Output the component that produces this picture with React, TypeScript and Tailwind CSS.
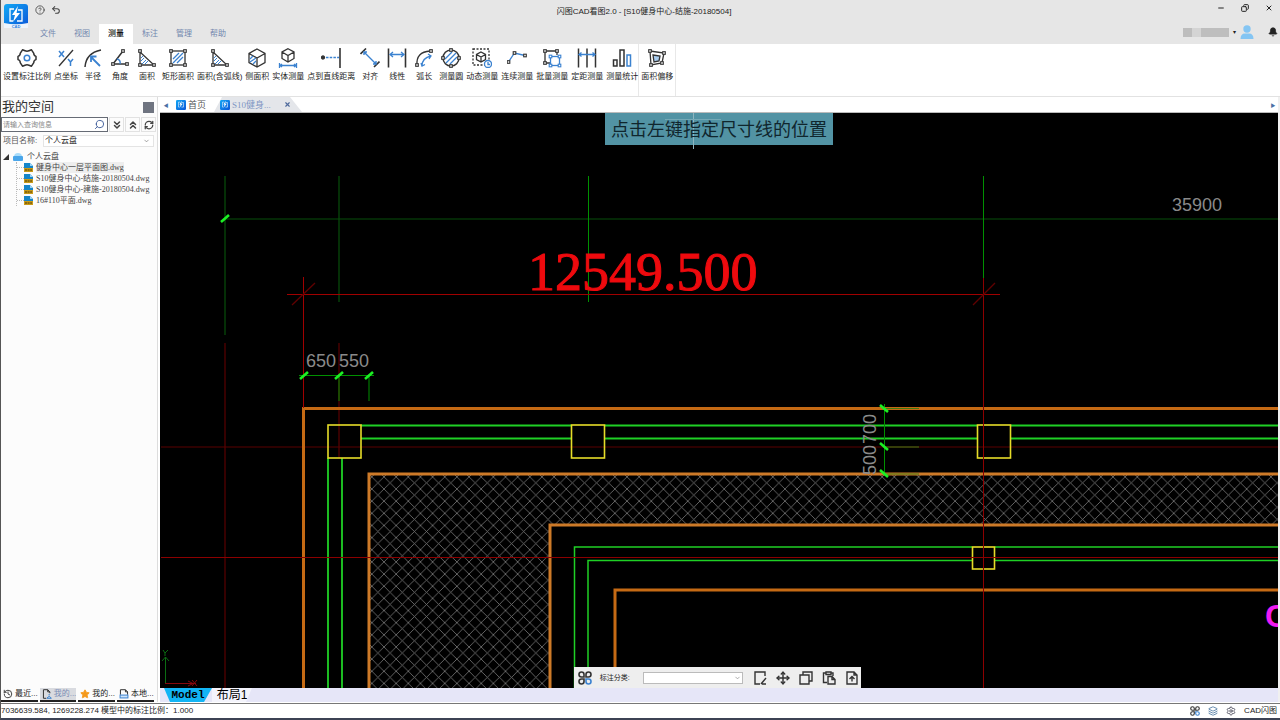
import type { ReactNode } from "react";
import { Bell, ChevronDown, ChevronsDown, ChevronsUp, CircleHelp, Layers, Minus, Move, RefreshCw, Search, Settings, Star, Undo2, X, Copy, History } from "lucide-react";

const INK = "#333333";
const BLUE = "#3b82d0";

function Tool({ children }: { children: ReactNode }) {
  return (
    <svg viewBox="0 0 20 20" className="h-5 w-5" fill="none" stroke={INK} strokeWidth="1.3">
      {children}
    </svg>
  );
}

// Small square handles used on the vertices of most measuring icons
function Handles({ at, color = INK }: { at: [number, number][]; color?: string }) {
  return (
    <>
      {at.map(([x, y]) => (
        <rect key={`${x}-${y}`} x={x - 1.3} y={y - 1.3} width="2.6" height="2.6" fill="#fff" stroke={color} strokeWidth="1.1" />
      ))}
    </>
  );
}

const triangle = (
  <Tool>
    <path d="M3 4V17H17Z" />
    <path d="M5 16L9 12M8 16L11 13M4 13L7 10M4 10L6 8" stroke={BLUE} strokeWidth="1" />
    <Handles at={[[3, 3], [3, 17], [17, 17]]} />
  </Tool>
);

const tools = [
  {
    label: "设置标注比例",
    icon: (
      <Tool>
        <path d="M5.5 1.8L8 2.8Q10 3.6 12 2.8L14.5 1.8L16.8 5.4Q16.6 7.600 19 8.400V11.600Q16.600 12.400 16.800 14.600L14.500 18.200L12 17.200Q10 16.400 8 17.200L5.500 18.200L3.200 14.600Q3.400 12.400 1 11.600V8.400Q3.400 7.600 3.200 5.400Z" strokeLinejoin="round" strokeWidth="1.5" />
        <circle cx="10" cy="10" r="2.800" stroke={BLUE} strokeWidth="1.500" />
      </Tool>
    ),
  },
  {
    label: "点坐标",
    icon: (
      <Tool>
        <path d="M17 2L3 18" />
        <path d="M3 3L8 9M8 3L3 9M12 11L14.500 14M17 11L14.500 14V18" stroke={BLUE} strokeWidth="1.500" />
      </Tool>
    ),
  },
  {
    label: "半径",
    icon: (
      <Tool>
        <path d="M2 19Q3 5 18 2" strokeWidth="1.500" />
        <path d="M17 18L8 9M8 14V8.500H13.500" stroke={BLUE} strokeWidth="1.800" />
      </Tool>
    ),
  },
  {
    label: "角度",
    icon: (
      <Tool>
        <path d="M13 3L3 16H17" strokeWidth="1.500" />
        <path d="M7 11Q11 12 10 16" stroke={BLUE} />
        <Handles at={[[13, 3], [3, 16], [17, 16]]} />
      </Tool>
    ),
  },
  { label: "面积", icon: triangle },
  {
    label: "矩形面积",
    icon: (
      <Tool>
        <rect x="3" y="3" width="14" height="14" />
        <path d="M5 11L11 5M5 15L15 5M9 15L15 9" stroke={BLUE} />
        <Handles at={[[3, 3], [17, 3], [3, 17], [17, 17]]} />
      </Tool>
    ),
  },
  { label: "面积(含弧线)", icon: triangle },
  {
    label: "侧面积",
    icon: (
      <Tool>
        <path d="M10 1L18 5.500V14.500L10 19L2 14.500V5.500ZM2 5.500L10 10L18 5.500M10 10V19" />
        <path d="M3 11L6 8M3 14L9 10M6 16L9 13" stroke={BLUE} />
      </Tool>
    ),
  },
  {
    label: "实体测量",
    icon: (
      <Tool>
        <path d="M10 0.700L16 4V10.500L10 14L4 10.500V4ZM4 4L10 7.500L16 4M10 7.500V14" />
        <path d="M1.500 15V20M18.500 15V20M2 17.500H18M4 16L2 17.500L4 19M16 16L18 17.500L16 19" stroke={BLUE} />
      </Tool>
    ),
  },
  {
    label: "点到直线距离",
    icon: (
      <Tool>
        <circle cx="2" cy="9.500" r="1.500" fill={INK} />
        <path d="M5 9.500H18" stroke={BLUE} strokeDasharray="2.500 1.200" />
        <path d="M19 0V20" strokeWidth="1.600" />
      </Tool>
    ),
  },
  {
    label: "对齐",
    icon: (
      <Tool>
        <path d="M0.500 6L6 0.500M14 19L19.500 13.500" strokeWidth="1.600" />
        <path d="M4 4L16 16M4 7V4H7M16 13V16H13" stroke={BLUE} strokeWidth="1.400" />
      </Tool>
    ),
  },
  {
    label: "线性",
    icon: (
      <Tool>
        <path d="M1.500 0.500V19.500M18.500 0.500V19.500" strokeWidth="1.600" />
        <path d="M3 6.500H17M6 4L3 6.500L6 9M14 4L17 6.500L14 9" stroke={BLUE} />
      </Tool>
    ),
  },
  {
    label: "弧长",
    icon: (
      <Tool>
        <path d="M3 17Q2 4 16 3" />
        <path d="M8 18Q8 10 17 8M7 15L8 18L11 16.500M14 6L17 8L15 11" stroke={BLUE} />
        <Handles at={[[3, 17], [17, 3]]} />
      </Tool>
    ),
  },
  {
    label: "测量圆",
    icon: (
      <Tool>
        <circle cx="10" cy="10" r="8" strokeWidth="1.500" />
        <path d="M4 11L11 4M5 15L15 5M9 16L16 9" stroke={BLUE} />
        <Handles at={[[10, 2], [18, 10], [10, 18], [2, 10]]} />
      </Tool>
    ),
  },
  {
    label: "动态测量",
    icon: (
      <Tool>
        <rect x="1" y="1" width="16" height="16" strokeDasharray="2 1.500" />
        <path d="M9 4L13.500 6.500V11.500L9 14L4.500 11.500V6.500ZM4.500 6.500L9 9L13.500 6.500M9 9V14" />
        <circle cx="16" cy="16" r="3.500" fill="#fff" stroke={BLUE} />
        <path d="M16 14V16.500H18" stroke={BLUE} />
      </Tool>
    ),
  },
  {
    label: "连续测量",
    icon: (
      <Tool>
        <path d="M1.500 14L7.500 5L18 7.500" stroke={BLUE} />
        <Handles at={[[1.500, 14], [7.500, 5], [18, 7.500]]} />
      </Tool>
    ),
  },
  {
    label: "批量测量",
    icon: (
      <Tool>
        <path d="M3 3H15M3 3V15H8M15 3V7" />
        <Handles at={[[3, 3], [15, 3], [3, 15]]} />
        <rect x="8.500" y="8.500" width="9" height="9" stroke={BLUE} />
        <Handles at={[[8.500, 8.500], [17.500, 8.500], [8.500, 17.500], [17.500, 17.500]]} color={BLUE} />
      </Tool>
    ),
  },
  {
    label: "定距测量",
    icon: (
      <Tool>
        <path d="M1.500 0.500V19.500M10 0.500V19.500M18.500 0.500V19.500" strokeWidth="1.500" />
        <path d="M2 6.500H18M4.500 4.500L2 6.500L4.500 8.500M15.500 4.500L18 6.500L15.500 8.500" stroke={BLUE} />
      </Tool>
    ),
  },
  {
    label: "测量统计",
    icon: (
      <Tool>
        <path d="M1.500 12H5V18H1.500ZM8 2H12V18H8Z" strokeWidth="1.500" />
        <path d="M15 7H18.500V18H15Z" stroke={BLUE} strokeWidth="1.500" />
      </Tool>
    ),
  },
];

const offsetTool = {
  label: "面积偏移",
  icon: (
    <Tool>
      <path d="M3 3L17 5L15 15L4 17Z" />
      <path d="M6 7L13 8L12 13L7 14Z" fill="#a9cdf0" />
      <Handles at={[[3, 3], [17, 5], [15, 15], [4, 17]]} />
    </Tool>
  ),
};

const menus = ["文件", "视图", "测量", "标注", "管理", "帮助"];

const files = ["健身中心一层平面图.dwg", "S10健身中心-结施-20180504.dwg", "S10健身中心-建施-20180504.dwg", "16#110平面.dwg"];

function ToolButton({ label, icon }: { label: string; icon: ReactNode }) {
  return (
    <button className="flex min-w-6 flex-col items-center gap-1 whitespace-nowrap text-[8px] leading-[10px] text-[#222]">
      {icon}
      {label}
    </button>
  );
}

function Logo({ className, caption = false }: { className: string; caption?: boolean }) {
  return (
    <svg viewBox="0 0 24 24" className={className}>
      <defs>
        <linearGradient id="logo" x1="0" y1="0" x2="1" y2="1">
          <stop offset="0" stopColor="#12a8f5" />
          <stop offset="1" stopColor="#0a55d8" />
        </linearGradient>
      </defs>
      <rect width="24" height="24" rx="3" fill="url(#logo)" />
      <path d="M10 5H6V17H9M14 6H18V17H13" fill="none" stroke="#fff" strokeWidth="1.300" />
      <path d="M14 2L8 11H11L9 18L16 9H12.500Z" fill="#fff" />
      {caption && (
        <>
          <path d="M0 19Q12 21.500 24 19V24H0Z" fill="#eef4fb" />
          <text x="12" y="24" textAnchor="middle" fill="#2b7de0" className="text-[4px] font-bold">CAD</text>
        </>
      )}
    </svg>
  );
}

function DwgIcon() {
  return (
    <svg viewBox="0 0 9 9" className="h-[9px] w-[9px] shrink-0">
      <path d="M0 0H6L9 3V6H0Z" fill="#1585c9" />
      <path d="M6 0V3H9Z" fill="#9bd3f5" />
      <rect y="5" width="9" height="4" fill="#c99a18" />
      <path d="M1 7H8" stroke="#4c3a05" strokeDasharray="2 0.600" />
    </svg>
  );
}

function Clover({ className }: { className: string }) {
  return (
    <svg viewBox="0 0 14 14" className={className} fill="none" stroke={INK} strokeWidth="1.600">
      <path d="M6 6H3.500A2.500 2.500 0 1 1 6 3.500ZM8 6V3.500A2.500 2.500 0 1 1 10.500 6ZM6 8V10.500A2.500 2.500 0 1 1 3.500 8Z" />
      <path d="M8 8H10.500A2.500 2.500 0 1 1 8 10.500Z" stroke={BLUE} />
    </svg>
  );
}

function PageIcon({ mark }: { mark: "pencil" | "copy" | "paste" | "up" | "user" | "drive" }) {
  return (
    <svg viewBox="0 0 14 14" className="h-full w-full" fill="none" stroke={INK} strokeWidth="1.400">
      {mark === "pencil" && <path d="M12 5V1H2V13H7M8 13L13 7M9 13H13" />}
      {mark === "copy" && <path d="M4 4V1H13V10H10M1 4H10V13H1Z" />}
      {mark === "paste" && <path d="M4 2H1.500V11.500H5M9 2H11V5M4 1H9V3.500H4ZM6 5.500H10L13 8.500V13H6ZM10 5.500V8.500H13" />}
      {mark === "up" && <path d="M9 1H2V13H12V4ZM9 1V4H12M7 10.500V5.500M4.500 8L7 5.500L9.500 8" />}
      {mark === "user" && (
        <>
          <path d="M6 13H2V1H8L11 4V6M8 1V4H11" />
          <path d="M7 13Q10 8 13 13ZM10 7V9" stroke={BLUE} />
        </>
      )}
      {mark === "drive" && (
        <>
          <path d="M2 8V1H9L12 4V8M9 1V4H12" />
          <rect x="1.500" y="8.500" width="11" height="4" fill="#cfe5fa" stroke={BLUE} />
        </>
      )}
    </svg>
  );
}

function Drawing() {
  const columns: [number, number, number][] = [[328, 425, 33], [571.5, 425, 33], [977.5, 425, 33], [972.5, 547, 22]];
  return (
    <svg viewBox="160 113 1118 575" preserveAspectRatio="xMinYMin slice" className="absolute inset-0 h-full w-full" fill="none">
      <defs>
        <pattern id="hatch" x="384" y="489" width="12.150" height="12.150" patternUnits="userSpaceOnUse">
          <path d="M0 0L12.150 12.150M12.150 0L0 12.150" stroke="#787878" strokeWidth="0.800" />
        </pattern>
      </defs>

      {/* Hatched wall */}
      <path d="M369 474H1278V525H550V688H369Z" fill="url(#hatch)" />

      {/* Axes */}
      <g stroke="#074f0a" strokeWidth="1.200">
        <path d="M225 176V335M339 176V302M225 219H1278" />
      </g>
      <path d="M588.500 176V302M983.500 176V278" stroke="#009000" />
      <path d="M225 343V688M339 343V458M161 447H1278" stroke="#5a0000" strokeWidth="1.200" />

      {/* Walls */}
      <path d="M303.500 688V408.500H1278M615 688V590H1278" stroke="#c56a14" strokeWidth="3" />
      <path d="M369 688V474H1278M550 688V525H1278" stroke="#cd7a28" strokeWidth="3" />
      <g stroke="#1fd025" strokeWidth="1.800">
        <path d="M361 425.500H571M605 425.500H977M1011 425.500H1278" />
        <path d="M361 438.500H571M605 438.500H977M1011 438.500H1278" />
        <path d="M328 458V688M342 458V688" />
        <path d="M574.500 688V547H972M995 547H1278M588 688V560.500H972M995 560.500H1278" strokeWidth="1.500" />
      </g>
      {columns.map(([x, y, size]) => (
        <rect key={x} x={x} y={y} width={size} height={size} stroke="#e6dc28" strokeWidth="1.600" />
      ))}
      <path d="M161 557.500H1278M983.500 278V688" stroke="#8c0000" />

      {/* Active dimension */}
      <path d="M287 294.500H1000M303.500 277V408" stroke="#a00000" />
      <path d="M292 305L315 283M973 305L995 283" stroke="#600000" strokeWidth="1.300" />
      <text x="528" y="290" fill="#ee0a0e" stroke="#ee0a0e" strokeWidth="1" className="font-['Liberation_Serif',serif] text-[54px]">12549.500</text>

      {/* Chain dimensions */}
      <path d="M299 375.500H374M339 376V401M369 376V401M884.500 404V476" stroke="#009000" />
      <path d="M884 408.500H919M884 447H919M884 474H919" stroke="#3f7a12" />
      <path d="M221 222L229 215M300 379L308 372M335 379L343 372M365 379L373 372M880 405L888 412M880 443L888 450M880 470L888 477" stroke="#1cf024" strokeWidth="2.600" />
      <g fill="#8a8a8a" className="font-['Liberation_Sans',sans-serif] text-[18px]">
        <text x="1172" y="211">35900</text>
        <text x="306" y="367">650</text>
        <text x="339" y="367">550</text>
        <text transform="translate(876 444) rotate(-90)">700</text>
        <text transform="translate(876 475) rotate(-90)">500</text>
      </g>
      <text x="1265" y="627" fill="#f01af0" className="font-['Liberation_Sans',sans-serif] text-[32px] font-bold">C</text>

      {/* Coordinate system mark */}
      <path d="M165.500 683V657M162 661L165.500 657L169 661M163 650L165 653L168 650M165 653V656" stroke="#0b6d12" />
      <path d="M165 683.500H196M188 681L193 683.500L188 686M192 680L197 686M197 680L192 686" stroke="#86080c" />
    </svg>
  );
}

export default function App() {
  return (
    <div className="flex h-screen flex-col overflow-hidden border-b-2 border-l border-b-[#3c4254] border-l-[#555] bg-white font-['Liberation_Sans','Noto_Sans_CJK_SC',sans-serif] text-[8px] leading-[10px] text-[#222]">
      {/* Title bar and menu */}
      <header className="flex h-11 shrink-0 bg-[#e6e6e6]">
        <div className="flex w-[30px] flex-col items-center pt-1">
          <Logo className="h-6 w-6" caption />
        </div>
        <div className="flex flex-1 flex-col justify-between">
          <div className="flex h-6 items-center">
            <div className="flex flex-1 gap-1.5 pb-1 pl-1 text-[#444]">
              <button aria-label="帮助"><CircleHelp size={10} /></button>
              <button aria-label="撤销"><Undo2 size={10} strokeWidth={2.5} /></button>
            </div>
            <h1 className="mr-5">闪图CAD看图2.0 - [S10健身中心-结施-20180504]</h1>
            <div className="flex flex-1 items-start justify-end gap-4 pb-2 pr-[7px]">
              <button aria-label="最小化"><Minus size={8} strokeWidth={3} /></button>
              <button aria-label="还原"><Copy size={8} strokeWidth={3} className="-scale-x-100" /></button>
              <button aria-label="关闭"><X size={8} strokeWidth={3} /></button>
            </div>
          </div>
          <div className="flex h-5 items-stretch justify-between">
            <nav className="flex">
              {menus.map((menu) => (
                <button key={menu} className={menu === "测量" ? "w-[34px] bg-white font-medium text-[#111]" : "w-[34px] text-[#7286ae]"}>
                  {menu}
                </button>
              ))}
            </nav>
            <div className="flex items-center gap-1 pb-1 pr-0.5">
              <div className="flex h-[9px]">
                <span className="w-[9px] bg-[#bdbdbd]" />
                <span className="w-[9px] bg-[#d4d4d4]" />
                <span className="w-7 bg-[#bebebe]" />
              </div>
              <span className="text-[6px]">▾</span>
              <svg viewBox="0 0 14 14" className="h-3.5 w-3.5" fill="#84c5f3">
                <circle cx="7" cy="4" r="3.700" />
                <path d="M0.500 14Q0.500 8.500 5 8.500H9Q13.500 8.500 13.500 14Z" />
              </svg>
              <button aria-label="通知" className="ml-2.5"><Bell size={10} fill="#222" /></button>
            </div>
          </div>
        </div>
      </header>

      {/* Ribbon */}
      <div className="flex h-[53px] shrink-0 border-b border-[#e2e2e2]">
        <div className="flex items-start gap-[3px] border-r border-[#e8e8e8] pl-0.5 pt-1">
          {tools.map((tool) => (
            <ToolButton key={tool.label} {...tool} />
          ))}
        </div>
        <div className="flex items-start border-r border-[#e8e8e8] px-0.5 pt-1">
          <ToolButton {...offsetTool} />
        </div>
      </div>

      <div className="flex min-h-0 flex-1">
        {/* Space browser */}
        <aside className="flex w-[157px] shrink-0 flex-col border-r border-[#ddd] bg-[#fcfcfc]">
          <div className="flex h-5 items-center justify-between pl-px pr-[3px]">
            <h2 className="text-[13px] leading-5 text-[#333]">我的空间</h2>
            <button aria-label="固定" className="h-[11px] w-[11px] bg-[#6f7480]" />
          </div>
          <div className="flex h-[15px] gap-px">
            <label className="flex w-[107px] items-center border border-[#666b75] bg-white pr-0.5">
              <input aria-label="查询" placeholder="请输入查询信息" className="w-0 flex-1 px-px text-[7px] leading-[11px] outline-none placeholder:text-[#888]" />
              <Search size={11} className="-scale-x-100 text-[#3d5c99]" />
            </label>
            <button aria-label="展开" className="flex w-[15px] items-center justify-center border border-[#e2e2e2] text-[#444]"><ChevronsDown size={12} strokeWidth={3} /></button>
            <button aria-label="收起" className="flex w-[15px] items-center justify-center border border-[#e2e2e2] text-[#444]"><ChevronsUp size={12} strokeWidth={3} /></button>
            <button aria-label="刷新" className="flex w-[15px] items-center justify-center border border-[#e2e2e2] text-[#444]"><RefreshCw size={10} strokeWidth={3} /></button>
          </div>
          <div className="flex h-[18px] items-center gap-1.5 pl-0.5 pr-[3px]">
            <label htmlFor="project" className="w-[34px] whitespace-nowrap text-[#555]">项目名称:</label>
            <div className="relative flex-1">
              <select id="project" className="block h-3 w-full appearance-none border border-[#e4e4e4] bg-white pl-px text-[8px] leading-[10px]">
                <option>个人云盘</option>
              </select>
              <ChevronDown size={7} className="pointer-events-none absolute right-1 top-1/2 -translate-y-1/2 text-[#666]" />
            </div>
          </div>
          <div className="flex-1 overflow-hidden whitespace-nowrap pt-px font-['Liberation_Serif','Noto_Sans_CJK_SC',serif] leading-[11px] text-[#444]">
            <div className="flex h-[11px] items-center gap-1 pl-0.5">
              <svg viewBox="0 0 6 6" className="h-1.5 w-1.5"><path d="M6 0V6H0Z" fill="#333" /></svg>
              <svg viewBox="0 0 10 9" className="h-[9px] w-2.5">
                <path d="M1 5Q1 1 5 1Q9 1 9 5Z" fill="#a9dcfa" />
                <rect y="4" width="10" height="5" rx="1" fill="#4aa6ea" />
              </svg>
              个人云盘
            </div>
            <ul className="ml-[15px] border-l border-dotted border-[#bbb]">
              {files.map((file, i) => (
                <li key={file} className="flex h-[11px] items-center gap-[3px]">
                  <span className="-mr-[3px] w-[7px] border-t border-dotted border-[#bbb]" />
                  <DwgIcon />
                  <span className={i === 0 ? "bg-[#eee]" : ""}>{file}</span>
                </li>
              ))}
            </ul>
          </div>
          <div className="flex h-[14px] gap-0.5 pr-1">
            <button className="flex flex-1 items-center gap-0.5 whitespace-nowrap border-b-2 border-[#222] pl-0.5"><History size={10} />最近...</button>
            <button className="flex flex-1 items-center gap-0.5 whitespace-nowrap border-b-2 border-[#222] bg-[#d9dbe0] pl-0.5 text-[#7b8db5]"><span className="h-2.5 w-2.5"><PageIcon mark="user" /></span>我的...</button>
            <button className="flex flex-1 items-center gap-0.5 whitespace-nowrap border-b-2 border-[#222] pl-0.5"><Star size={10} fill="#f59a1c" className="text-[#f59a1c]" />我的...</button>
            <button className="flex flex-1 items-center gap-0.5 whitespace-nowrap border-b-2 border-[#222] pl-0.5"><span className="h-2.5 w-2.5"><PageIcon mark="drive" /></span>本地...</button>
          </div>
        </aside>

        <main className="flex min-w-0 flex-1 flex-col border-r-2 border-[#f0f0f0] pl-0.5">
          {/* Open documents */}
          <div className="flex h-4 shrink-0 items-end border-b border-[#bbb]">
            <button aria-label="向左" className="w-3 self-center text-[5px] text-[#4a6fa5]">◀</button>
            <button className="flex h-[15px] items-center gap-0.5 pl-1 pr-2 text-[9px] text-[#555]">
              <Logo className="h-2.5 w-2.5" />
              首页
            </button>
            <div className="flex h-[15px] w-[88px] items-center gap-0.5 bg-[#e4e6ea] pl-1.5 text-[#7f96c4] [clip-path:polygon(8px_0,76px_0,100%_100%,0_100%)]">
              <Logo className="h-2.5 w-2.5" />
              <span className="w-[50px] font-['Liberation_Serif','Noto_Sans_CJK_SC',serif] text-[9px]">S10健身...</span>
              <button aria-label="关闭标签"><X size={7} strokeWidth={4} className="text-[#4f6a9c]" /></button>
            </div>
            <button aria-label="向右" className="ml-auto w-2.5 self-center text-[5px] text-[#4a6fa5]">▶</button>
          </div>

          <section className="relative min-h-0 flex-1 overflow-hidden bg-black">
            <Drawing />
            <div className="absolute left-1/2 top-0 h-8 w-[228px] -translate-x-1/2 bg-[#5293a4] text-center text-[18px] leading-[34px] text-[#10262d]">
              <span className="absolute left-[88px] top-0 h-9 w-px bg-[#8fb5bf]" />
              <span className="absolute left-[60px] top-1.5 h-px w-14 bg-[#76a9b6]" />
              <span className="relative">点击左键指定尺寸线的位置</span>
            </div>
            <div className="absolute bottom-0 left-[37%] flex h-[21px] items-center bg-[#eeeeee] pr-0.5">
              <Clover className="ml-1 h-3.5 w-3.5" />
              <label htmlFor="category" className="ml-2 w-[43px] text-[7px]">标注分类:</label>
              <div className="relative w-[100px]">
                <select id="category" className="block h-3 w-full appearance-none border border-[#bbb] bg-white">
                  <option></option>
                </select>
                <ChevronDown size={7} className="pointer-events-none absolute right-0.5 top-1/2 -translate-y-1/2 text-[#777]" />
              </div>
              <div className="ml-2.5 flex gap-[9px] text-[#333]">
                <button aria-label="编辑" className="h-3.5 w-3.5"><PageIcon mark="pencil" /></button>
                <button aria-label="移动"><Move size={14} strokeWidth={2.5} /></button>
                <button aria-label="复制" className="h-3.5 w-3.5"><PageIcon mark="copy" /></button>
                <button aria-label="粘贴" className="h-3.5 w-3.5"><PageIcon mark="paste" /></button>
                <button aria-label="导出" className="h-3.5 w-3.5"><PageIcon mark="up" /></button>
              </div>
            </div>
          </section>

          {/* Layouts */}
          <div className="flex h-[14px] shrink-0 bg-[#e6e6f8] pl-1 text-[12px] leading-[14px] text-black">
            <button className="w-12 bg-[#12b5f5] font-['Liberation_Mono',monospace] text-[11px] font-bold [clip-path:polygon(0_0,100%_0,40px_100%,6px_100%)]">Model</button>
            <button className="w-10 bg-[#f4f4fc] [clip-path:polygon(0_0,100%_0,34px_100%,0_100%)]">布局1</button>
          </div>
        </main>
      </div>

      {/* Status bar */}
      <footer className="mt-px flex h-[15px] shrink-0 items-center justify-between border-t border-[#777] pr-[3px]">
        <span>7036639.584, 1269228.274 模型中的标注比例：1.000</span>
        <div className="flex items-center gap-2 text-[#445]">
          <Clover className="h-2.5 w-2.5" />
          <Layers size={10} className="text-[#47739f]" />
          <Settings size={10} />
          <span className="text-[#222]">CAD闪图</span>
        </div>
      </footer>
    </div>
  );
}
